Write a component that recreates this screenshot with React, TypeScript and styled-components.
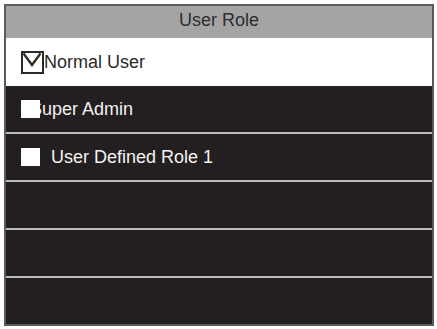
import React from 'react';
import styled, { createGlobalStyle } from 'styled-components';

const GlobalStyle = createGlobalStyle`
  html, body {
    margin: 0;
    padding: 0;
    background: #ffffff;
  }
  body {
    font-family: "Liberation Sans", Arial, sans-serif;
  }
`;

const Screen = styled.div`
  width: 437px;
  height: 329px;
  padding: 4px 3px 0 4px;
  box-sizing: border-box;
`;

const Frame = styled.div`
  width: 430px;
  height: 322px;
  box-sizing: border-box;
  border: 2px solid #5b5b5b;
  display: flex;
  flex-direction: column;
  background: #231f20;
`;

const Header = styled.div`
  height: 32px;
  flex: none;
  background: #a4a4a4;
  color: #2e2e2e;
  font-size: 18px;
  display: flex;
  align-items: center;
  justify-content: center;
  padding-bottom: 3px;
  box-sizing: border-box;
`;

const Row = styled.div<{ selected?: boolean; divider?: boolean }>`
  height: ${p => (p.selected ? 48 : p.divider ? 48 : 46)}px;
  flex: none;
  box-sizing: border-box;
  display: flex;
  align-items: center;
  padding-left: 15px;
  font-size: 18px;
  background: ${p => (p.selected ? '#ffffff' : '#231f20')};
  color: ${p => (p.selected ? '#2a2a2a' : '#f2f2f2')};
  border-top: ${p => (p.divider ? '2px solid #bcbcbc' : 'none')};
`;

const Box = styled.span<{ checked?: boolean }>`
  position: relative;
  z-index: 1;
  flex: none;
  box-sizing: border-box;
  width: ${p => (p.checked ? 23 : 19)}px;
  height: ${p => (p.checked ? 23 : 18)}px;
  background: #ffffff;
  border: ${p => (p.checked ? '2.5px solid #2a2a2a' : 'none')};
  display: flex;
`;

const Label = styled.span<{ offset: number }>`
  margin-left: ${p => p.offset}px;
  white-space: nowrap;
`;

const CheckMark = () => (
  <svg width="18" height="18" viewBox="0 0 18 18">
    <path d="M0.5 0.5 L9 12 L17.5 0.5" fill="none" stroke="#2a2a2a" strokeWidth="2.4" />
  </svg>
);

const roles = [
  { name: 'Normal User', checked: true, offset: 0 },
  { name: 'Super Admin', checked: false, offset: -10 },
  { name: 'User Defined Role 1', checked: false, offset: 11 },
];

export default function App() {
  return (
    <>
      <GlobalStyle />
      <Screen>
        <Frame>
          <Header>User Role</Header>
          {roles.map((r, i) => (
            <Row key={r.name} selected={r.checked} divider={i > 1}>
              <Box checked={r.checked}>{r.checked && <CheckMark />}</Box>
              <Label offset={r.offset}>{r.name}</Label>
            </Row>
          ))}
          <Row divider />
          <Row divider />
          <Row divider />
        </Frame>
      </Screen>
    </>
  );
}
